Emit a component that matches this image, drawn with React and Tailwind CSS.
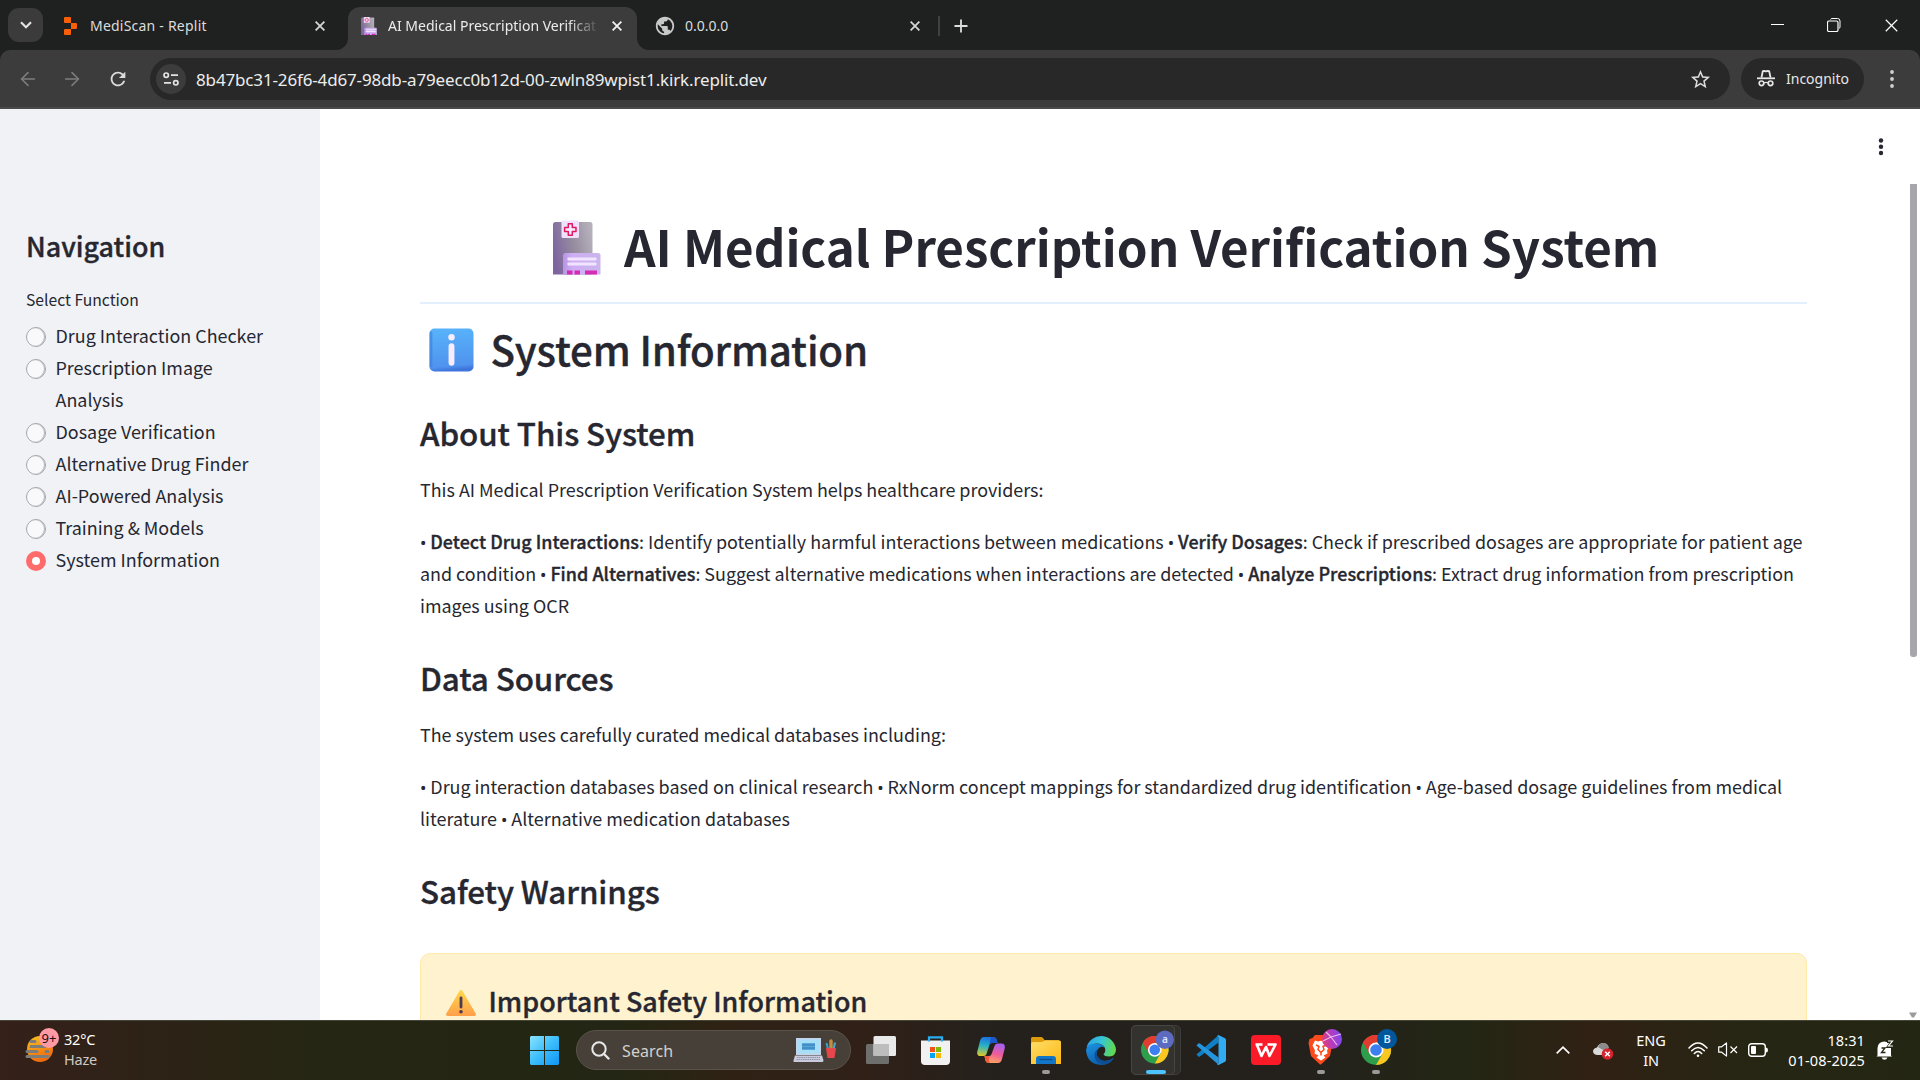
import React from "react";
import { MdPublic, MdStarBorder, MdRefresh } from "react-icons/md";
import { ArrowLeft, ArrowRight } from "lucide-react";

const UI = "font-['Noto_Sans','Open_Sans',sans-serif]";
const SEMI = "font-medium [-webkit-text-stroke:0.35px_#262730]";

function Cross({ size = 10, width = 1.8, color = "#d5d5d5" }) {
  return (
    <svg width={size} height={size} viewBox="0 0 10 10" className="shrink-0">
      <path d="M0.6 0.6 9.4 9.4M9.4 0.6 0.6 9.4" stroke={color} strokeWidth={width} fill="none" />
    </svg>
  );
}

function Hospital({ className }) {
  return (
    <svg viewBox="0 0 48 54" className={className}>
      <defs>
        <linearGradient id="tower" x1="0" x2="1" y1="0.6" y2="0.3">
          <stop offset="0" stopColor="#7d63a0" />
          <stop offset="0.5" stopColor="#948b9e" />
          <stop offset="1" stopColor="#b6b0bb" />
        </linearGradient>
        <linearGradient id="annex" x1="0" x2="1">
          <stop offset="0" stopColor="#b795e2" />
          <stop offset="0.25" stopColor="#cfaef4" />
          <stop offset="1" stopColor="#c9b6ea" />
        </linearGradient>
      </defs>
      <path d="M0 54V4q0-2.500 2.500-2.500H37q2.500 0 2.500 2.500V54z" fill="url(#tower)" />
      <path d="M10 54V35q0-2.500 2.500-2.500H45q2.500 0 2.500 2.500V54z" fill="url(#annex)" />
      <rect x="8.500" y="0" width="17.500" height="17.500" rx="1.500" fill="#efe0fb" />
      <path d="M15.300 3.300h4v3.700h3.700v4h-3.700v3.700h-4V11h-3.700V7h3.700z" fill="#f7e9ff" stroke="#e0185f" strokeWidth="1.500" strokeLinejoin="round" />
      <rect x="14.500" y="37" width="29" height="3" rx="0.800" fill="#f1e4ff" />
      <rect x="14.500" y="42" width="29" height="3" rx="0.800" fill="#f1e4ff" />
      <path d="M14 50h5.500v4H14zM21.500 50h5.500v4h-5.500zM32 50h12v4H32z" fill="#d62bb5" />
    </svg>
  );
}

function InfoEmoji() {
  return (
    <svg width="45" height="44" viewBox="0 0 46 45" className="shrink-0">
      <defs>
        <linearGradient id="info" x1="0.1" x2="0.2" y1="0" y2="1">
          <stop offset="0" stopColor="#58b4fb" />
          <stop offset="0.9" stopColor="#4f93ee" />
          <stop offset="1" stopColor="#3f74dc" />
        </linearGradient>
      </defs>
      <rect x="0.500" y="0.500" width="45" height="44" rx="5" fill="url(#info)" />
      <path d="M2 5v34" stroke="#3d7fdd" strokeWidth="3" opacity="0.600" strokeLinecap="round" />
      <circle cx="23" cy="9.500" r="3.300" fill="#f9ecff" />
      <rect x="20" y="15.500" width="6" height="23" rx="3" fill="#f9ecff" />
    </svg>
  );
}

function WarningEmoji() {
  return (
    <svg width="30" height="26" viewBox="0 0 30 26" className="shrink-0">
      <defs>
        <linearGradient id="warn" x1="0" x2="0" y1="0" y2="1">
          <stop offset="0" stopColor="#ffd64a" />
          <stop offset="1" stopColor="#ff9f4b" />
        </linearGradient>
      </defs>
      <path d="M13.500 1q1.500-1.800 3 0L29.700 23.500q0.800 2-1.200 2.500H1.500q-2-0.500-1.200-2.500z" fill="url(#warn)" />
      <path d="M15 8v9" stroke="#4a3b52" strokeWidth="2.800" strokeLinecap="round" />
      <circle cx="15" cy="21.800" r="1.800" fill="#4a3b52" />
    </svg>
  );
}

function TabStrip() {
  return (
    <div className={`flex h-[50px] bg-[#1f2120] text-[14px] leading-[20px] text-[#dcdcdc] ${UI}`}>
      <div className="mt-[8px] ml-[8px] flex h-[34px] w-[35px] shrink-0 items-center justify-center rounded-[11px] bg-[#3b3b3b]">
        <svg width="12" height="8" viewBox="0 0 12 8"><path d="M1 1.200 6 6.200 11 1.200" stroke="#e3e3e3" strokeWidth="2.200" fill="none" /></svg>
      </div>
      <div className="flex w-[305px] items-center pt-[1px] pl-[21px]">
        <svg width="13" height="18" viewBox="0 0 13 18" className="shrink-0">
          <path d="M1 0h5q1 0 1 1v5H1q-1 0-1-1V1q0-1 1-1zM7 6h5q1 0 1 1v4q0 1-1 1H7zM1 12h6v5q0 1-1 1H1q-1 0-1-1v-4q0-1 1-1z" fill="#f95f06" />
        </svg>
        <span className="ml-[13px] w-[225px] tracking-[0.22px] whitespace-nowrap">MediScan - Replit</span>
        <Cross />
      </div>
      <div className="relative mt-[7px] flex h-[43px] w-[289px] items-center rounded-t-[12px] bg-[#3c3c3c] pb-[6px] pl-[13px] text-[#ececec]">
        <svg width="12" height="12" className="absolute bottom-0 -left-[12px]"><path d="M12 0v12H0A12 12 0 0 0 12 0z" fill="#3c3c3c" /></svg>
        <svg width="12" height="12" className="absolute -right-[12px] bottom-0"><path d="M0 0v12h12A12 12 0 0 1 0 0z" fill="#3c3c3c" /></svg>
        <Hospital className="h-[18px] w-[16px] shrink-0" />
        <span className="ml-[11px] w-[209px] overflow-hidden whitespace-nowrap [mask-image:linear-gradient(to_right,black_180px,transparent_212px)]">AI Medical Prescription Verificat</span>
        <span className="ml-[15px] flex"><Cross color="#f2f2f2" /></span>
      </div>
      <div className="flex items-center pt-[1px] pl-[17px]">
        <MdPublic size={22} color="#c9c9c9" />
        <span className="ml-[9px] w-[225px]">0.0.0.0</span>
        <Cross />
        <span className="ml-[18px] h-[20px] w-[2px] bg-[#3f403f]" />
        <svg width="14" height="14" viewBox="0 0 14 14" className="ml-[14px]"><path d="M7 0.500v13M0.500 7h13" stroke="#dedede" strokeWidth="1.800" /></svg>
      </div>
      <div className="ml-auto flex items-center pr-[22px]">
        <svg width="13" height="13" viewBox="0 0 13 13"><path d="M0 5.500h13" stroke="#fff" strokeWidth="1" /></svg>
        <svg width="14" height="14" viewBox="0 0 14 14" className="ml-[43px]">
          <path d="M3.500 1.500Q4 0.500 5 0.500h5.500q2.500 0 2.500 2.500v6q0 1-1 1.500" stroke="#fff" fill="none" />
          <rect x="0.500" y="3" width="10.500" height="10.500" rx="1.500" stroke="#fff" fill="none" strokeWidth="1.200" />
        </svg>
        <span className="ml-[44px] flex"><Cross size={13} width={0.9} color="#fff" /></span>
      </div>
    </div>
  );
}

function Toolbar() {
  return (
    <div className="bg-[#1f2120]">
      <div className={`flex h-[59px] items-center rounded-t-[10px] border-b-2 border-[#4a4a4a] bg-[#3c3c3c] pt-[1px] text-[#e6e6e6] ${UI}`}>
        <ArrowLeft size={22} strokeWidth={1.7} color="#7d7d7d" className="-mt-[1px] ml-[17px]" />
        <ArrowRight size={22} strokeWidth={1.7} color="#7d7d7d" className="-mt-[1px] ml-[22px]" />
        <MdRefresh size={22} color="#dcdcdc" className="-mt-[1px] ml-[24px]" />
        <div className="ml-[21px] flex h-[42px] w-[1580px] items-center rounded-full bg-[#282828]">
          <div className="ml-[6px] flex h-[30px] w-[30px] items-center justify-center rounded-full bg-[#3c3c3c]">
            <svg width="16" height="14" viewBox="0 0 16 14" fill="none" stroke="#e3e3e3" strokeWidth="1.700">
              <circle cx="3.200" cy="3.200" r="2.200" /><path d="M8 3.200h7M1 10.800h7" /><circle cx="12.800" cy="10.800" r="2.200" />
            </svg>
          </div>
          <span className="mt-[1px] ml-[10px] text-[17px] leading-[24px] tracking-[-0.15px] whitespace-nowrap text-[#ededed]">8b47bc31-26f6-4d67-98db-a79eecc0b12d-00-zwln89wpist1.kirk.replit.dev</span>
          <MdStarBorder size={23} color="#dcdcdc" className="mr-[18px] ml-auto" />
        </div>
        <div className="-mt-[1px] ml-[11px] flex h-[42px] w-[123px] items-center rounded-full bg-[#282828]">
          <svg width="18" height="17" viewBox="0 0 18 17" className="ml-[16px]" fill="none" stroke="#e6e6e6">
            <path d="M0 8.300h18" strokeWidth="1.800" />
            <path d="M4.500 7.500 5.800 1.200 7.500 0.900 9 1.500 10.500 0.900 12.200 1.200 13.500 7.500" strokeWidth="1.800" strokeLinejoin="round" />
            <circle cx="4.500" cy="13.300" r="2.300" strokeWidth="1.700" /><circle cx="13.500" cy="13.300" r="2.300" strokeWidth="1.700" />
            <path d="M6.800 13q2.200-1.300 4.400 0" strokeWidth="1.400" />
          </svg>
          <span className="ml-[11px] text-[14px] leading-[20px]">Incognito</span>
        </div>
        <svg width="4" height="18" viewBox="0 0 4 18" className="-mt-[1px] ml-[26px]" fill="#d0d0d0"><circle cx="2" cy="2" r="1.900" /><circle cx="2" cy="9" r="1.900" /><circle cx="2" cy="16" r="1.900" /></svg>
      </div>
    </div>
  );
}

const functions = [
  "Drug Interaction Checker",
  "Prescription Image Analysis",
  "Dosage Verification",
  "Alternative Drug Finder",
  "AI-Powered Analysis",
  "Training & Models",
  "System Information",
];

function Sidebar() {
  return (
    <aside className="w-[320px] shrink-0 bg-[#f0f2f6] pt-[119px] pr-[26px] pl-[26px]">
      <h2 className={`text-[26.88px] leading-[36px] ${SEMI}`}>Navigation</h2>
      <div className="mt-[23px] text-[15.68px] leading-[26px]">Select Function</div>
      <div className="mt-[6px]">
        {functions.map((name, i) => (
          <label key={name} className="flex items-start">
            {i === 6 ? (
              <span className="mt-[8px] flex h-[20px] w-[20px] shrink-0 items-center justify-center rounded-full bg-[#ff6b6b]"><span className="h-[8px] w-[8px] rounded-full bg-white" /></span>
            ) : (
              <span className="mt-[8px] h-[20px] w-[20px] shrink-0 rounded-full border border-[#a5a6ab] bg-[#f9f9fb] shadow-[inset_-1px_0_0_#b5b6ba]" />
            )}
            <span className="ml-[9.500px] w-[220px] leading-[32px]">{name}</span>
          </label>
        ))}
      </div>
    </aside>
  );
}

function H3({ children, className }) {
  return <h3 className={`text-[31.36px] leading-[42px] tracking-[-0.1px] ${SEMI} ${className}`}>{children}</h3>;
}

function B({ children }) {
  return <strong className="font-medium tracking-[0.04px] [-webkit-text-stroke:0.35px_#262730]">{children}</strong>;
}

function Dot() {
  return <span className="inline-block w-[6.3px] font-['Noto_Sans'] text-[17px] leading-none">•</span>;
}

function Main() {
  return (
    <main className="flex min-w-0 flex-1 bg-white">
      <div className="ml-[100px] w-[1387px] shrink-0 pt-[103px]">
        <div className="flex h-[92px] border-b-2 border-[#e3effc]">
          <Hospital className="mt-[8px] ml-[133px] h-[55px] w-[48px] shrink-0" />
          <h1 className="mt-[1px] ml-[23px] text-[49.28px] leading-[66px] font-bold whitespace-nowrap">AI Medical Prescription Verification System</h1>
        </div>
        <h2 className={`mt-[18px] flex h-[54px] items-center text-[40.32px] leading-[54px] tracking-[-0.17px] ${SEMI}`}>
          <span className="mt-[2px] mr-[17px] ml-[8.500px] flex"><InfoEmoji /></span>System Information
        </h2>
        <H3 className="mt-[36px]">About This System</H3>
        <p className="mt-[19px]">This AI Medical Prescription Verification System helps healthcare providers:</p>
        <p className="mt-[20px] whitespace-nowrap">
          <Dot /> <B>Detect Drug Interactions</B>: Identify potentially harmful interactions between medications <Dot /> <B>Verify Dosages</B>: Check if prescribed dosages are appropriate for patient age<br />
          and condition <Dot /> <B>Find Alternatives</B>: Suggest alternative medications when interactions are detected <Dot /> <B>Analyze Prescriptions</B>: Extract drug information from prescription<br />
          images using OCR
        </p>
        <H3 className="mt-[36px]">Data Sources</H3>
        <p className="mt-[19px]">The system uses carefully curated medical databases including:</p>
        <p className="mt-[20px] whitespace-nowrap">
          <Dot /> Drug interaction databases based on clinical research <Dot /> RxNorm concept mappings for standardized drug identification <Dot /> Age-based dosage guidelines from medical<br />
          literature <Dot /> Alternative medication databases
        </p>
        <H3 className="mt-[36px]">Safety Warnings</H3>
        <div className="mt-[41px] h-[120px] rounded-[10px] border border-[#ffeaa7] bg-[#fff2ce] pt-[29px] pl-[25px]">
          <h4 className={`flex h-[36px] items-center text-[26.88px] leading-[36px] tracking-[0.04px] ${SEMI}`}>
            <span className="mt-[3px] mr-[12.500px] flex"><WarningEmoji /></span>Important Safety Information
          </h4>
        </div>
      </div>
      <div className="ml-auto flex w-[47px] shrink-0 flex-col pt-[29px]">
        <svg width="6" height="18" viewBox="0 0 6 18" className="ml-[4.5px]" fill="#262730"><circle cx="3" cy="2.500" r="2.200" /><circle cx="3" cy="8.800" r="2.200" /><circle cx="3" cy="15" r="2.200" /></svg>
        <span className="mt-[28px] ml-[37px] h-[473px] w-[7px] rounded-b-[3px] bg-[#a7a7ab]" />
        <svg width="8" height="6" viewBox="0 0 8 6" className="mt-auto mb-[2px] ml-[36px] shrink-0"><path d="M0 0.500h8L5 5.500H3z" fill="#9b9b9b" /></svg>
      </div>
    </main>
  );
}

function Chrome({ letter, badge }) {
  return (
    <svg width="36" height="40" viewBox="0 0 36 40" className="-mt-[4px] ml-[6px]">
      <g transform="translate(0,7)">
        <circle cx="15" cy="15" r="15" fill="#2d9f4c" />
        <path d="M15 15 2 7.500A15 15 0 0 1 28 7.500z" fill="#e23c31" />
        <path d="M2 7.500 8.500 18.800 15 15 15 7.500 28 7.500A15 15 0 0 0 2 7.500z" fill="#e23c31" />
        <path d="M15 7.500H28A15 15 0 0 1 15 30L21.500 18.800z" fill="#fcc621" />
        <circle cx="15" cy="15" r="7.500" fill="#fff" /><circle cx="15" cy="15" r="5.800" fill="#3b7ff0" />
      </g>
      <circle cx="26" cy="11" r="10" fill={badge} />
      <text x="26" y="15" textAnchor="middle" fontSize="11" fontWeight="600" fill="#dfe6ff" fontFamily="Noto Sans">{letter}</text>
    </svg>
  );
}

function Slot({ children, mark }) {
  return (
    <div className="flex h-[60px] w-[55px] shrink-0 flex-col items-center">
      <div className="flex h-[50px] items-end justify-center pb-[5px]">{children}</div>
      {mark && <span className={`h-[4px] rounded-full ${mark}`} />}
    </div>
  );
}

function Taskbar() {
  return (
    <footer className={`flex h-[60px] text-white ${UI} bg-[linear-gradient(90deg,#35201a_0%,#2c2316_9%,#252613_17%,#232614_32%,#2f2215_38%,#302018_45%,#24211d_52%,#24211d_68%,#232614_76%,#302114_83%,#252613_92%,#242614_100%)] shadow-[inset_0_1px_0_#45453a]`}>
      <div className="flex w-[530px] shrink-0">
        <svg width="36" height="38" viewBox="0 0 36 38" className="mt-[7px] ml-[24px]">
          <defs><linearGradient id="sun" x1="0" x2="0.4" y1="0" y2="1"><stop offset="0" stopColor="#fbc51d" /><stop offset="1" stopColor="#f06a10" /></linearGradient></defs>
          <circle cx="16" cy="22" r="13" fill="url(#sun)" />
          <path d="M7 14.500h4M7 19.500h14M3 24.500h10M22 24.500h2M3 29.500h21" stroke="#7e7d7a" strokeWidth="3" strokeLinecap="round" />
          <circle cx="25" cy="11" r="10" fill="#ff99a4" />
          <text x="25" y="16" textAnchor="middle" fontSize="13" fill="#1c1012" fontFamily="Noto Sans">9+</text>
        </svg>
        <div className="mt-[9px] ml-[4px] text-[14.5px] leading-[20px] tracking-[-0.2px]">
          <div>32°C</div>
          <div className="text-[#cfcac4]">Haze</div>
        </div>
      </div>
      <svg width="29" height="29" viewBox="0 0 29 29" className="mt-[16px] shrink-0">
        <defs><linearGradient id="win" x1="0" x2="1" y1="0" y2="1"><stop offset="0" stopColor="#8be3ff" /><stop offset="0.5" stopColor="#3cbdfb" /><stop offset="1" stopColor="#0f95f5" /></linearGradient></defs>
        <path d="M1 0h13v14H0V1zM15 0h13l1 1v13H15zM0 15h14v14H1l-1-1zM15 15h14v13l-1 1H15z" fill="url(#win)" />
      </svg>
      <div className="mt-[10px] ml-[17px] flex h-[40px] w-[275px] shrink-0 items-center rounded-full border border-[#5b534a] bg-[#474039]">
        <svg width="19" height="19" viewBox="0 0 19 19" className="ml-[14px]"><circle cx="8" cy="8" r="6.700" stroke="#e8e8e8" strokeWidth="2" fill="none" /><path d="M13 13l4.500 4.500" stroke="#e8e8e8" strokeWidth="2.400" strokeLinecap="round" /></svg>
        <span className="mt-[1px] ml-[12px] text-[16px] leading-[20px] tracking-[0.1px] text-[#d4d0cc]">Search</span>
        <svg width="44" height="26" viewBox="0 0 44 26" className="mr-[13px] ml-auto">
          <path d="M3 1h25v17H3z" fill="#c3d5ec" /><path d="M5 2.500h21v14H5z" fill="#a9def7" /><path d="M9 6h13v7H9z" fill="#5ba6d8" /><path d="M9 8h13M9 11h13" stroke="#2f78b5" />
          <path d="M2 18.500h27l1.500 5q0 1.500-1.500 1.500H1.500Q0 25 0.500 23.500z" fill="#c9cbdc" /><path d="M4 20.500h23M3.500 22.500h24" stroke="#8f93ab" strokeDasharray="1.500 0.700" />
          <path d="M35 12l-1.500-6" stroke="#3ba0c9" strokeWidth="2" /><path d="M38 12V4" stroke="#c08f42" strokeWidth="3.400" strokeLinecap="round" /><path d="M40.500 12l1.500-6.500" stroke="#4fa3c4" strokeWidth="2.200" /><path d="M33 11h10l-1.500 10h-7z" fill="#e5474a" />
        </svg>
      </div>
      <div className="ml-[2px] flex shrink-0">
        <Slot>
          <svg width="30" height="28" viewBox="0 0 30 28" className="mb-[1px]">
            <rect x="0" y="8" width="23" height="20" rx="1.500" fill="#6e6e6d" /><rect x="7.500" y="0" width="22.500" height="20" rx="1.500" fill="#e9e9e9" /><rect x="7.500" y="8" width="15.500" height="12" fill="#bdbdbd" />
          </svg>
        </Slot>
        <Slot>
          <svg width="29" height="29" viewBox="0 0 29 29">
            <path d="M0 4.500h29V25q0 4-4 4H4q-4 0-4-4z" fill="#f1f1f1" />
            <path d="M8 5.500V1.300h13v4.200" stroke="#27aef0" strokeWidth="2.200" fill="none" />
            <path d="M9 11h5v5H9z" fill="#f1511b" /><path d="M15 11h5v5h-5z" fill="#80bb03" /><path d="M9 17h5v5H9z" fill="#00a4ef" /><path d="M15 17h5v5h-5z" fill="#fbb803" />
          </svg>
        </Slot>
        <Slot>
          <svg width="28" height="26" viewBox="0 0 28 26" className="mb-[2px]">
            <defs>
              <linearGradient id="cpA" x1="0.3" x2="0.1" y1="0" y2="1"><stop offset="0" stopColor="#1b74e0" /><stop offset="0.45" stopColor="#2ab3c4" /><stop offset="1" stopColor="#e7c921" /></linearGradient>
              <linearGradient id="cpB" x1="0.6" x2="0.3" y1="0" y2="1"><stop offset="0" stopColor="#a85ff0" /><stop offset="0.5" stopColor="#ee5c9a" /><stop offset="1" stopColor="#ffa95e" /></linearGradient>
            </defs>
            <path d="M7 0h9q3 0 3.700 3L20.500 6H15q-2 0-2.700 2.200L9.500 17q-0.700 2-2.500 2H3.500Q-0.500 19 0.300 14.500L3 4Q4 0 7 0z" fill="url(#cpA)" />
            <path d="M21 26h-9q-3 0-3.700-3L7.500 19H12q2 0 2.700-2.200L17.500 9q0.700-2.500 3-2.500H24.500Q28.500 6.500 27.700 11.500L25 22Q24 26 21 26z" fill="url(#cpB)" />
            <path d="M14 0h2q3 0 3.700 3L20.500 6H15q-2 0-2.700 2.200z" fill="#1d57c9" />
            <path d="M12 26H13.500q-2.500-1-1-7H7.500l0.800 4Q9 26 12 26z" fill="#f4593a" />
          </svg>
        </Slot>
        <Slot mark="w-[8px] bg-[#9a9a98]">
          <svg width="30" height="27" viewBox="0 0 30 27" className="mb-[1px]">
            <defs><linearGradient id="fold" x1="0" x2="1" y1="0" y2="1"><stop offset="0" stopColor="#ffdd6a" /><stop offset="1" stopColor="#fdb913" /></linearGradient></defs>
            <path d="M0 1.500Q0 0 1.500 0H10q1 0 2 1l1.500 2H28v8H0z" fill="#dd9a0b" /><path d="M0 7Q0 5 2 5h9l3-1.500H28.500Q30 3.500 30 5V27H0z" fill="url(#fold)" />
            <path d="M5 27v-5q0-3 3-3H22q3 0 3 3v5z" fill="#1476c6" /><path d="M8.500 22.500h13" stroke="#0b4f91" strokeWidth="1.300" />
          </svg>
        </Slot>
        <Slot>
          <svg width="30" height="30" viewBox="0 0 30 30">
            <defs>
              <linearGradient id="edA" x1="0" x2="1" y1="0.1" y2="0.3"><stop offset="0" stopColor="#2a9fe6" /><stop offset="0.5" stopColor="#36c4d8" /><stop offset="1" stopColor="#5fd952" /></linearGradient>
              <linearGradient id="edB" x1="0" x2="0.6" y1="0" y2="1"><stop offset="0" stopColor="#1b94e4" /><stop offset="1" stopColor="#0c59a4" /></linearGradient>
            </defs>
            <path d="M0.500 12.500A15 15 0 0 1 30 14.500Q30 21 23 21.500 18 21.500 17.500 19 20 17 19 13 17 8.500 10.500 8.500 4 9 0.500 12.500z" fill="url(#edA)" />
            <path d="M0 15Q1 8.800 9.500 8.500 17 8.500 19 13 15 10.500 12.500 13.500 8 19 13.500 24 19 28.500 27.500 23 24 30 15 30 1 29 0 15z" fill="url(#edB)" />
            <path d="M12.500 13.500Q8 19 13.500 24 19 28.500 28 23 25 28.500 18 29.600 8 28 8.500 19.500 9 15.500 12.500 13.500z" fill="#0d4f96" />
          </svg>
        </Slot>
        <div className="relative mt-[5px] h-[50px] w-[55px]">
          <div className="ml-[3px] h-[50px] w-[50px] rounded-[5px] border border-[#3e3d3a] bg-[#302e2b]" />
          <div className="absolute top-0 left-[3px] flex h-[50px] w-[44px] flex-col rounded-[5px] border border-[#474643] bg-[#34322f]">
            <span className="mt-[6px] ml-[3px] flex"><Chrome letter="a" badge="#5c6bc0" /></span>
          </div>
          <span className="absolute top-[45px] left-[18px] h-[4px] w-[20px] rounded-full bg-[#4cc2ff]" />
        </div>
        <Slot>
          <svg width="30" height="30" viewBox="0 0 30 30">
            <path d="M0.500 19.500 2.300 21.500q0.800 0.600 1.600 0L22.500 7.500V0.300z" fill="#0f7fc7" />
            <path d="M0.500 10.500 2.300 8.500q0.800-0.600 1.600 0L22.500 22.500v7.200z" fill="#2596dd" />
            <path d="M22.500 0 29 3.200q1 0.500 1 1.700V25q0 1.200-1 1.700L22.500 30Q21.500 30 21 29q1.500 0 1.500-1.500V2.500Q22.500 1 21 1z" fill="#33abf2" />
          </svg>
        </Slot>
        <Slot>
          <svg width="30" height="30" viewBox="0 0 30 30">
            <rect width="30" height="30" rx="4" fill="#fb1a28" />
            <path d="M4.500 9.500h7M6 10l4.500 11L15 12l3.500 9L24.500 9.500h-8" stroke="#fff" strokeWidth="2.600" fill="none" strokeLinejoin="round" />
          </svg>
        </Slot>
        <Slot mark="w-[8px] bg-[#9a9a98]">
          <svg width="42" height="38" viewBox="0 0 42 38">
            <path d="M15 8h12l2.500 2.500 2.500 0.500 0.500 5-2.500 13-9 8.500h-1l-9-8.500-2.500-13 1-4 3-1z" fill="#fb4a1d" />
            <path d="M15 13.500l3 1 3-0.700 3 0.700 3-1 2.500 5-2.500 5 0.500 3-4 2 2 2-4.500 3-4.500-3 2-2-4-2 0.500-3-2.500-5z" fill="#fff" />
            <path d="M16 18l3 1.500-1 3 3 3 3-3-1-3 3-1.500M21 25.500v3" stroke="#fb4a1d" strokeWidth="1.500" fill="none" />
            <defs><linearGradient id="br" x1="0" x2="1" y1="0.600" y2="0.400"><stop offset="0" stopColor="#e03c78" /><stop offset="0.5" stopColor="#b23cc0" /><stop offset="1" stopColor="#7a4af0" /></linearGradient></defs>
            <circle cx="32" cy="12" r="10" fill="url(#br)" /><path d="M23 14l8-4 10-3M31 10l6 8M26 5l5 5" stroke="#e9b8ee" strokeWidth="1.200" fill="none" />
          </svg>
        </Slot>
        <Slot mark="w-[8px] bg-[#9a9a98]">
          <span className="-mb-[3px] flex"><Chrome letter="B" badge="#01579b" /></span>
        </Slot>
      </div>
      <div className="ml-auto flex shrink-0 items-center pr-[26px] pb-[1px]">
        <svg width="14" height="8" viewBox="0 0 14 8"><path d="M0.700 7.300 7 1.200l6.300 6.100" stroke="#fff" strokeWidth="1.700" fill="none" /></svg>
        <svg width="21" height="18" viewBox="0 0 21 18" className="mt-[3px] ml-[23px]">
          <path d="M4 13q-4-0.500-4-4 0.500-3 4-3.500Q6 1 10.500 1q4 0.500 5 4.500l-3 7.500z" fill="#d9d9d9" /><path d="M5 5Q7 0.500 11 1q4 0.500 5 5l-6 2z" fill="#8b8b8b" />
          <circle cx="14.500" cy="12" r="5.800" fill="#d8232f" /><path d="M12.200 9.700l4.600 4.600M16.800 9.700l-4.600 4.600" stroke="#fff" strokeWidth="1.500" />
        </svg>
        <div className="ml-[22px] w-[30px] text-center text-[14.5px] leading-[20px] tracking-[-0.1px]">ENG<br />IN</div>
        <svg width="20" height="16" viewBox="0 0 20 16" className="ml-[22px]" fill="none" stroke="#fff" strokeWidth="1.500" strokeLinecap="round">
          <path d="M1 6Q10-4 19 6M3.700 8.800q6.300-6.700 12.600 0M6.300 11.500q3.700-4 7.400 0" /><circle cx="10" cy="13.800" r="1.300" fill="#fff" stroke="none" />
        </svg>
        <svg width="20" height="15" viewBox="0 0 20 15" className="ml-[10px]" fill="none" stroke="#fff" strokeWidth="1.200">
          <path d="M0.700 4.800h3L8.500 0.900v13.200L3.700 10.200h-3z" strokeLinejoin="round" /><path d="M12.500 4.500l6.500 6.500M19 4.500 12.500 11" />
        </svg>
        <svg width="21" height="14" viewBox="0 0 21 14" className="ml-[10px]"><rect x="0.700" y="0.700" width="16.600" height="12.600" rx="3" stroke="#fff" strokeWidth="1.400" fill="none" /><rect x="3" y="3" width="5" height="8" rx="1" fill="#fff" /><path d="M18 4.500q2 0 2 2.500t-2 2.500z" fill="#fff" /></svg>
        <div className="ml-[17px] w-[79px] text-right text-[14.5px] leading-[20px] tracking-[0.1px]">18:31<br />01-08-2025</div>
        <svg width="18" height="20" viewBox="0 0 18 20" className="ml-[11px]">
          <path d="M1.500 15.500V8Q2 1.500 8.500 1.500q6.500 0.500 6.500 7v7l1 1H0.500zM5.500 17.500h6q-1 2.200-3 2.200t-3-2.200z" fill="#fff" />
          <path d="M5.500 8h3.500l-3.500 4.500h4" stroke="#252613" strokeWidth="1.300" fill="none" /><path d="M11 1.500h5L12.500 6.500h4.500" stroke="#252613" strokeWidth="3" fill="none" /><path d="M12 1h4.500L12.500 6h4.500" stroke="#fff" strokeWidth="1.200" fill="none" />
        </svg>
      </div>
    </footer>
  );
}

export default function App() {
  return (
    <div className="flex h-[1080px] w-[1920px] flex-col overflow-hidden font-['Noto_Sans_CJK_SC','Noto_Sans',sans-serif] text-[#262730]">
      <TabStrip />
      <Toolbar />
      <div className="flex h-[911px] overflow-hidden text-[17.91px] leading-[32px]">
        <Sidebar />
        <Main />
      </div>
      <Taskbar />
    </div>
  );
}
